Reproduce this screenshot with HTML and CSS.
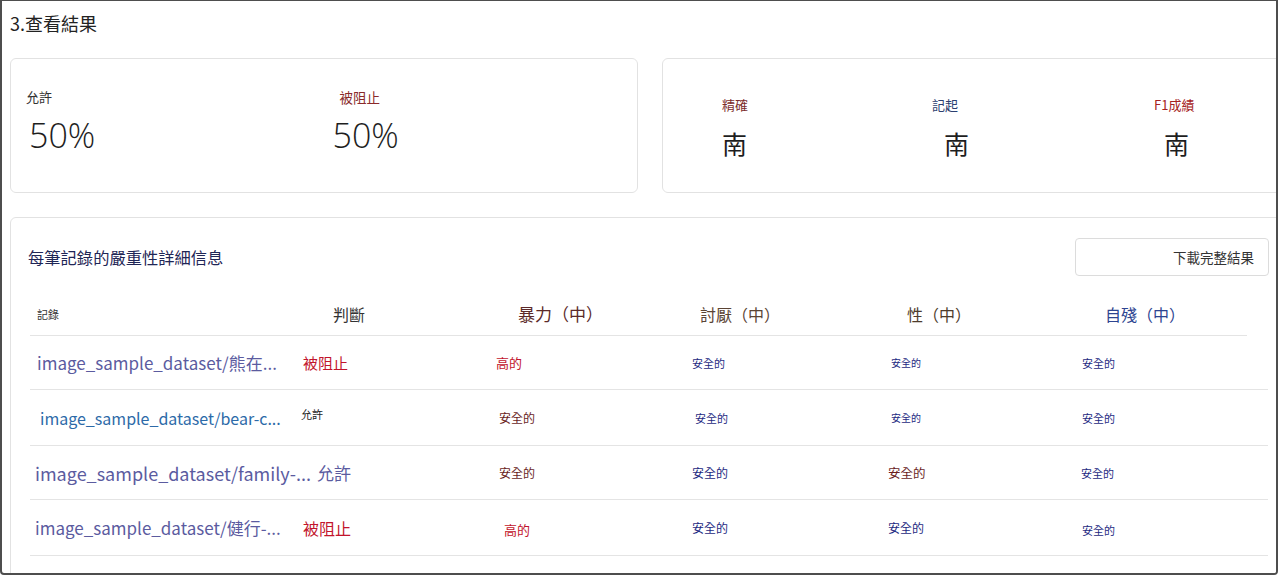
FILE: index.html
```html
<!DOCTYPE html>
<html lang="zh-Hant">
<head>
<meta charset="utf-8">
<title>查看結果</title>
<link rel="stylesheet" href="styles.css">
</head>
<body>
<div class="frame">
  <div class="content">
    <h2 class="page-title">3.查看結果</h2>
    <div class="stats">
      <div class="card stat-card">
        <div class="stat-col">
          <div class="stat-label c-dark">允許</div>
          <div class="stat-value shift3">50%</div>
        </div>
        <div class="stat-col">
          <div class="stat-label c-maroon shift8 big">被阻止</div>
          <div class="stat-value shift1">50%</div>
        </div>
      </div>
      <div class="card metric-card">
        <div class="metric-col w210">
          <div class="metric-label c-brown">精確</div>
          <div class="metric-value">南</div>
        </div>
        <div class="metric-col w222">
          <div class="metric-label c-navy">記起</div>
          <div class="metric-value shift12">南</div>
        </div>
        <div class="metric-col">
          <div class="metric-label c-red">F1成績</div>
          <div class="metric-value shift10">南</div>
        </div>
      </div>
    </div>
    <div class="card detail-card">
      <div class="detail-head">
        <div class="detail-title">每筆記錄的嚴重性詳細信息</div>
        <button class="download-btn">下載完整結果</button>
      </div>
      <div class="table">
        <div class="trow thead">
          <div class="cell o7 h-rec">記錄</div>
          <div class="cell o38 h-judge">判斷</div>
          <div class="cell o28 h-violence">暴力（中）</div>
          <div class="cell o14 h-hate">討厭（中）</div>
          <div class="cell o25 h-sex">性（中）</div>
          <div class="cell o29 h-self">自殘（中）</div>
        </div>
        <div class="trow">
          <div class="cell o7 name-a">image_sample_dataset/熊在...</div>
          <div class="cell o8 v-block">被阻止</div>
          <div class="cell o6 sev-high">高的</div>
          <div class="cell o6 safe-navy">安全的</div>
          <div class="cell o9 safe-navy tiny">安全的</div>
          <div class="cell o6 safe-navy">安全的</div>
        </div>
        <div class="trow">
          <div class="cell o10 name-b">image_sample_dataset/bear-c...</div>
          <div class="cell o6 v-allow-small up4">允許</div>
          <div class="cell o9 safe-red">安全的</div>
          <div class="cell o9 safe-navy">安全的</div>
          <div class="cell o9 safe-navy tiny">安全的</div>
          <div class="cell o6 safe-navy">安全的</div>
        </div>
        <div class="trow">
          <div class="cell o5 name-c">image_sample_dataset/family-...</div>
          <div class="cell o22 v-allow-big">允許</div>
          <div class="cell o9 safe-red">安全的</div>
          <div class="cell o6 safe-navy big">安全的</div>
          <div class="cell o6 safe-red big">安全的</div>
          <div class="cell o5 safe-navy">安全的</div>
        </div>
        <div class="trow">
          <div class="cell o5 name-a">image_sample_dataset/健行-...</div>
          <div class="cell o8 v-block big">被阻止</div>
          <div class="cell o14 sev-high down2">高的</div>
          <div class="cell o6 safe-navy big">安全的</div>
          <div class="cell o6 safe-navy big">安全的</div>
          <div class="cell o6 safe-navy down2">安全的</div>
        </div>
      </div>
    </div>
  </div>
</div>
</body>
</html>
```

FILE: styles.css
```css
* { box-sizing: border-box; }
html, body { margin: 0; padding: 0; background: #ffffff; }
body {
  font-family: "Noto Sans CJK TC", "Noto Sans", "Liberation Sans", sans-serif;
  color: #222;
}
.frame {
  width: 1278px;
  height: 575px;
  border-style: solid;
  border-color: #4e4e4e;
  border-width: 1px 2px 2px 2px;
  border-radius: 0 0 4px 4px;
  overflow: hidden;
  background: #fff;
}
.content {
  width: 1290px;
  padding: 0 0 0 8px;
}
.page-title {
  margin: 0;
  padding: 9px 0 0 0;
  height: 57px;
  font-size: 18px;
  font-weight: 400;
  line-height: 26px;
  color: #222;
}
.stats {
  display: flex;
  gap: 24px;
}
.card {
  border: 1px solid #e2e2e2;
  border-radius: 6px;
  background: #fff;
}
.stat-card {
  width: 628px;
  height: 135px;
  display: flex;
  padding: 28px 0 0 15px;
}
.stat-col { width: 309px; }
.stat-label {
  font-size: 13px;
  line-height: 20px;
}
.stat-label.big { font-size: 13.5px; }
.stat-value {
  font-family: "Open Sans", "Noto Sans", sans-serif;
  font-weight: 300;
  font-size: 34px;
  line-height: 40px;
  margin-top: 8px;
  color: #1e1e1e;
}
.shift1 { padding-left: 1px; }
.shift3 { padding-left: 3px; }
.shift8 { padding-left: 8px; }
.shift10 { padding-left: 10px; }
.shift12 { padding-left: 12px; }
.c-dark { color: #333; }
.c-maroon { color: #8a2a2a; }
.c-brown { color: #7b2c2c; }
.c-navy { color: #2c3f70; }
.c-red { color: #a52222; }
.metric-card {
  width: 630px;
  height: 135px;
  display: flex;
  padding: 36px 0 0 59px;
}
.w210 { width: 210px; }
.w222 { width: 222px; }
.metric-label {
  font-size: 13px;
  line-height: 20px;
}
.metric-value {
  font-size: 25px;
  line-height: 34px;
  margin-top: 11px;
  color: #1e1e1e;
}
.detail-card {
  margin-top: 24px;
  width: 1282px;
  height: 400px;
  padding: 20px 22px 0 17px;
}
.detail-head {
  display: flex;
  justify-content: space-between;
  align-items: center;
  height: 38px;
}
.detail-title {
  font-size: 16.3px;
  color: #1f2656;
}
.download-btn {
  width: 194px;
  height: 38px;
  border: 1px solid #dcdcdc;
  border-radius: 4px;
  background: #fff;
  font-family: inherit;
  font-size: 13.5px;
  color: #333;
  text-align: right;
  padding: 0 14px 0 0;
}
.table {
  margin-top: 16px;
  width: 1238px;
  margin-left: 2px;
}
.trow {
  display: grid;
  grid-template-columns: 265px 195px 196px 196px 194px 192px;
  align-items: center;
  height: 54px;
  border-bottom: 1px solid #e4e4e4;
}
.trow:nth-child(3), .trow:nth-child(5) { height: 56px; }
.thead {
  height: 44px;
  width: 1217px;
}
.cell { white-space: nowrap; line-height: 24px; }
.o5 { padding-left: 5px; }
.o6 { padding-left: 6px; }
.o7 { padding-left: 7px; }
.o8 { padding-left: 8px; }
.o9 { padding-left: 9px; }
.o10 { padding-left: 10px; }
.o14 { padding-left: 14px; }
.o22 { padding-left: 22px; }
.o25 { padding-left: 25px; }
.o28 { padding-left: 28px; }
.o29 { padding-left: 29px; }
.o38 { padding-left: 38px; }
.up4 { position: relative; top: -4px; }
.down2 { position: relative; top: 2px; }
.h-rec { font-size: 11px; color: #333; }
.h-judge { font-size: 16px; color: #333; }
.h-violence { font-size: 17px; color: #5c2a2a; }
.h-hate { font-size: 16px; color: #5b4434; }
.h-sex { font-size: 16px; color: #4e3c2c; }
.h-self { font-size: 16px; color: #2d4490; }
.name-a { font-size: 17px; color: #5b5b9f; }
.name-b { font-size: 16px; color: #2d6aa8; }
.name-c { font-size: 18px; color: #5b5b9f; }
.v-block { font-size: 15px; color: #c2142c; }
.v-block.big { font-size: 16px; }
.v-allow-small { font-size: 11px; color: #222; }
.v-allow-big { font-size: 17px; color: #5b5b9f; }
.sev-high { font-size: 13px; color: #c2142c; }
.safe-navy { font-size: 11px; color: #1e2a82; }
.safe-navy.tiny { font-size: 10px; }
.safe-navy.big { font-size: 12px; }
.safe-red { font-size: 12px; color: #6a1e1e; }
.safe-red.big { font-size: 12.5px; }
```
